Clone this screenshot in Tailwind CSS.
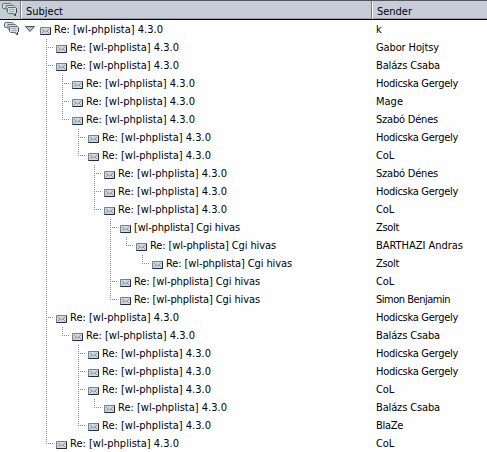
<!DOCTYPE html>
<html lang="hu">
<head>
<meta charset="utf-8">
<title>Thread list</title>
<script src="https://cdn.jsdelivr.net/npm/@tailwindcss/browser@4"></script>
</head>
<body class="w-[487px] h-[452px] overflow-hidden bg-[#fefefe] text-black text-[11px] leading-[18px] font-['DejaVu_Sans_Condensed','DejaVu_Sans',sans-serif] [font-stretch:condensed]">
<svg class="hidden">
  <symbol id="threads" viewBox="0 0 16 14">
    <g stroke="#6b7379" stroke-width="1" fill="#d5dcdf">
      <path d="M1 .5h7.500l1 1v3l-1 1h-3v2l-2-2h-2.500l-.5-.5v-4z"/>
      <path d="M4 2.500h7.500l1 1v3l-1 1h-3v2.500l-2.500-2.500h-1.500l-.5-.5v-4z"/>
      <path d="M6 4.500h7.500l1 1v4l-1 1v2.500l-2.500-2.500h-4.500l-1-1v-4.500z"/>
    </g>
    <path d="M14.500 5.500v4l-1 1v2.500l-2.500-2.500" stroke="#3d454c" fill="none"/>
    <path d="M7.500 6.500h5M7.500 8.500h5" stroke="#a3acb2"/>
  </symbol>
  <symbol id="mail" viewBox="0 0 11 8">
    <path d="M.5 .5h10v7H.5z" fill="#d0d8df" stroke="#78818a"/>
    <path d="M.5 7.500h10V.5" fill="none" stroke="#232a35"/>
    <path d="M2 2l3.500 3L9 2M2 6l2-2M9 6L7 4" fill="none" stroke="#8795a0"/>
  </symbol>
</svg>
<header class="flex h-5 border-t border-t-[#55575f] border-b border-b-black bg-[#c8ccd8] shadow-[inset_0_-1px_0_#9a9da8]">
  <div class="w-[21px] pl-[2px] pt-[2px] border-r border-[#777c89] bg-[#c3cdd3]"><svg class="w-4 h-[14px]"><use href="#threads"/></svg></div>
  <div class="w-[351px] pl-[4px] pt-[2px] leading-4 border-l border-l-white border-r border-r-[#777c89]"><span data-w="36" class="inline-block whitespace-nowrap pt-px">Subject</span></div>
  <div class="flex-1 pl-[4px] pt-[2px] leading-4 border-l border-l-white"><span data-w="34" class="inline-block whitespace-nowrap pt-px">Sender</span></div>
</header>
<main id="list"></main>
<script>
const A = ['Re: [wl-phplista] 4.3.0', 108], B = ['Re: [wl-phplista] Cgi hivas', 125], C = ['[wl-phplista] Cgi hivas', 105];
const HG = ['Hodicska Gergely', 81], BC = ['Balázs Csaba', 63], SD = ['Szabó Dénes', 61], CL = ['CoL', 17], ZS = ['Zsolt', 22];
const rows = [
  [0, A, ['k', 5]], [1, A, ['Gabor Hojtsy', 62]], [1, A, BC], [2, A, HG], [2, A, ['Mage', 26]], [2, A, SD],
  [3, A, HG], [3, A, CL], [4, A, SD], [4, A, HG], [4, A, CL], [5, C, ZS], [6, B, ['BARTHAZI Andras', 86]],
  [7, B, ZS], [5, B, CL], [5, B, ['Simon Benjamin', 73]], [1, A, HG], [2, A, BC], [3, A, HG], [3, A, HG],
  [3, A, CL], [4, A, BC], [3, A, ['BlaZe', 26]], [1, A, CL]
];
const hasNext = (i, level) => {
  for (let j = i + 1; j < rows.length; j++) {
    if (rows[j][0] < level) return false;
    if (rows[j][0] === level) return true;
  }
  return false;
};
const label = ([text, w]) => `<span data-w="${w}" class="inline-block whitespace-nowrap">${text}</span>`;
document.getElementById('list').innerHTML = rows.map(([level, subject, sender], i) => {
  let branches = '';
  for (let l = 1; l <= level; l++) {
    const more = hasNext(i, l);
    const v = more ? 'M.5 1v17' : l === level ? 'M.5 1v9' : '';
    const h = l === level ? 'M2 9.500h5' : '';
    branches += `<svg class="w-4 h-[18px] shrink-0" fill="none" stroke="#8c8c8c" stroke-dasharray="1 1"><path d="${v}${h}"/></svg>`;
  }
  return `<div class="flex h-[18px]">
    <div class="w-[25px] shrink-0 pl-1 pt-[2px]">${i ? '' : '<svg class="w-4 h-[14px]"><use href="#threads"/></svg>'}</div>
    <div class="flex w-[351px] shrink-0">
      <div class="${level ? 'w-[21px]' : 'w-[15px]'} shrink-0 pt-[6px]">${i ? '' : '<svg class="w-[10px] h-[6px]" viewBox="0 0 10 6"><path d="M.5 .5h9L5 5.500z" fill="#b9c1cc" stroke="#454b56"/></svg>'}</div>
      ${branches}
      <svg class="${level ? '-ml-[6px]' : ''} mt-[7px] w-[11px] h-[8px] shrink-0"><use href="#mail"/></svg>
      <div class="pl-[3px] pt-px">${label(subject)}</div>
    </div>
    <div class="pt-px">${label(sender)}</div>
  </div>`;
}).join('');
const fit = () => document.querySelectorAll('[data-w]').forEach(e => {
  e.style.letterSpacing = '0px';
  const w = e.getBoundingClientRect().width;
  e.style.letterSpacing = ((+e.dataset.w + 1 - w) / e.textContent.length) + 'px';
});
fit();
addEventListener('load', fit);
requestAnimationFrame(fit);
new ResizeObserver(fit).observe(document.querySelector('header'));
</script>
</body>
</html>
